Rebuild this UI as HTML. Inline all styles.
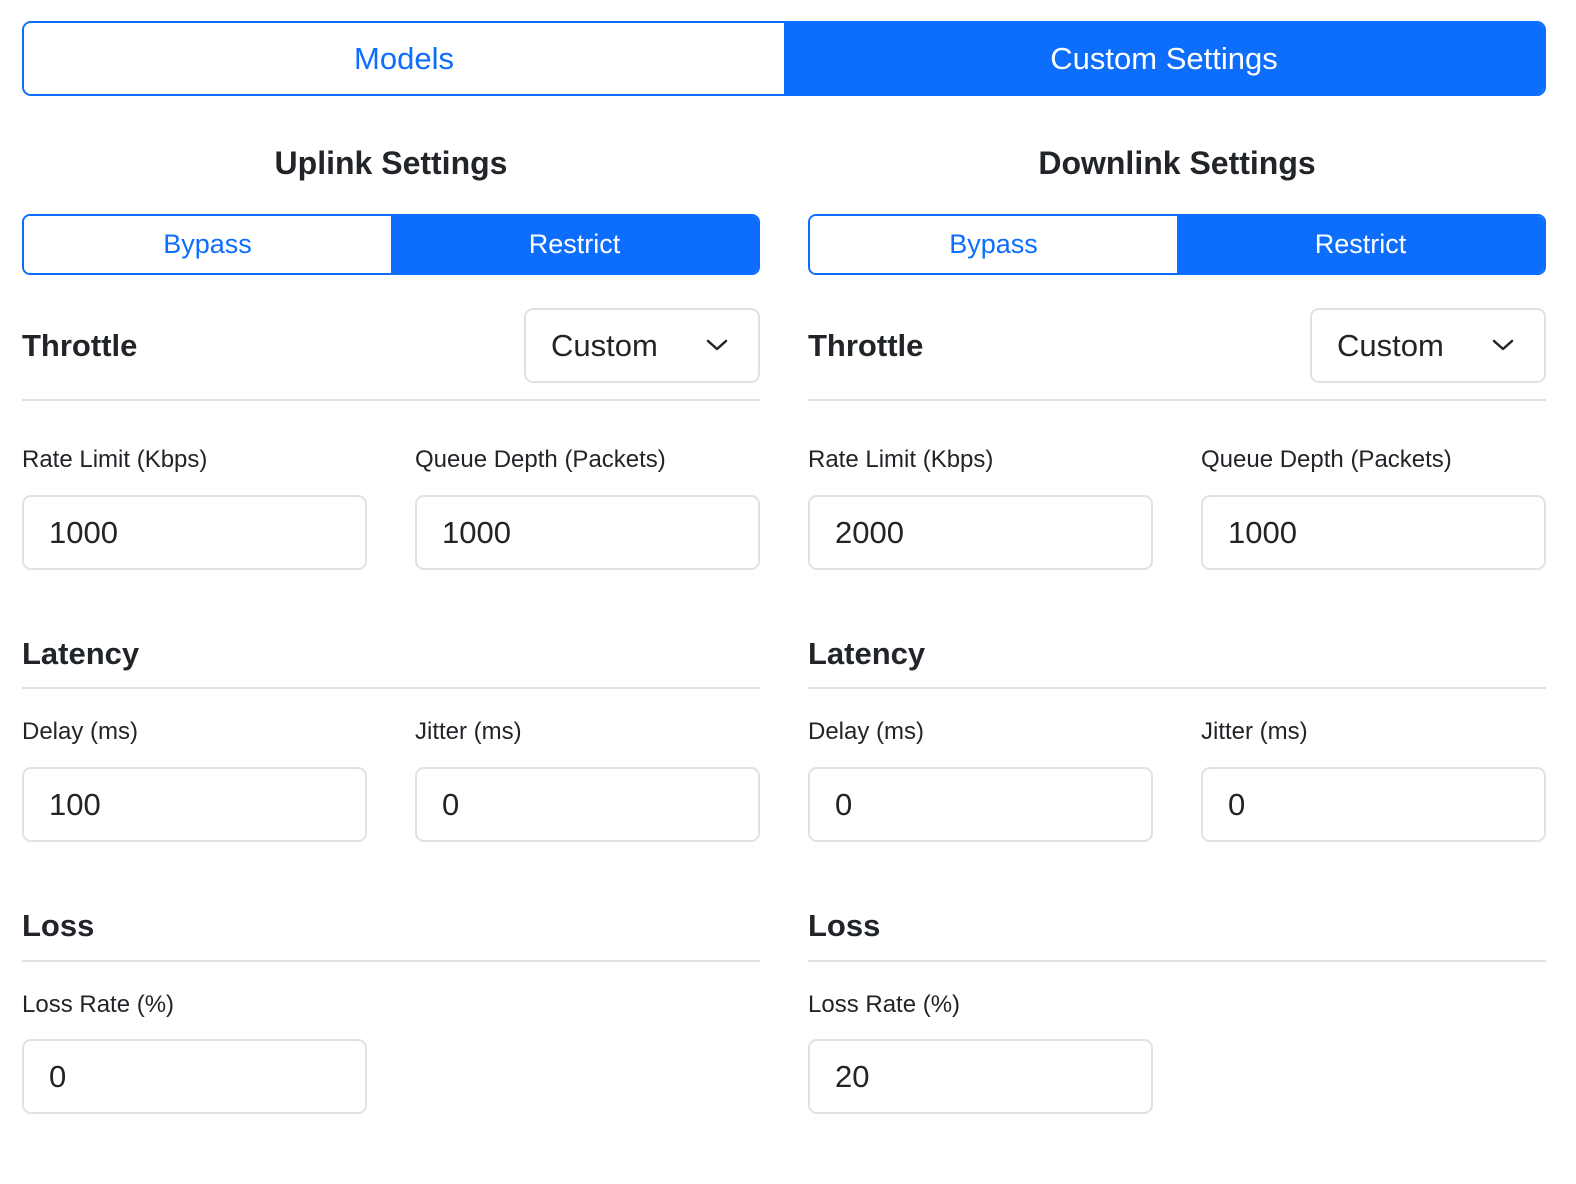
<!DOCTYPE html>
<html><head><meta charset="utf-8">
<style>
*{box-sizing:border-box;margin:0;padding:0}
body{width:1576px;height:1184px;background:#fff;font-family:"Liberation Sans",Arial,sans-serif;color:#212529;position:relative;overflow:hidden}
.a{position:absolute}
.tabs{left:22px;top:21px;width:1524px;height:75px;border:2px solid #0d6efd;border-radius:9px;overflow:hidden;display:flex}
.tabs div,.seg div{flex:1;display:flex;align-items:center;justify-content:center}
.on{background:#0d6efd;color:#fff}
.off{color:#0d6efd;background:#fff}
.tabs div{font-size:31px}
.seg{top:214px;width:738px;height:61px;border:2px solid #0d6efd;border-radius:8px;overflow:hidden;display:flex}
.seg div{font-size:27px}
.h{font-size:32px;font-weight:bold;text-align:center;width:738px;top:143px;line-height:40px}
.sec{font-size:31px;font-weight:bold;line-height:40px}
.hr{height:2px;background:#dee2e6;width:738px}
.lbl{font-size:24px;line-height:30px}
.inp{width:345px;height:75px;border:2px solid #dee2e6;border-radius:9px;font-size:31px;padding-left:25px;line-height:71px}
.sel{width:236px;height:75px;border:2px solid #dee2e6;border-radius:9px;font-size:31px;padding-left:25px;line-height:71px}
.sel svg{position:absolute;right:30px;top:28px}
</style></head><body>
<div class="a tabs"><div class="off">Models</div><div class="on">Custom Settings</div></div>

<!-- left column -->
<div class="a h" style="left:22px">Uplink Settings</div>
<div class="a seg" style="left:22px"><div class="off">Bypass</div><div class="on">Restrict</div></div>
<div class="a sec" style="left:22px;top:326px">Throttle</div>
<div class="a sel" style="left:524px;top:308px">Custom<svg width="22" height="14" viewBox="0 0 22 14"><path d="M2 3l9 8 9-8" fill="none" stroke="#212529" stroke-width="2.5" stroke-linecap="round" stroke-linejoin="round"/></svg></div>
<div class="a hr" style="left:22px;top:399px"></div>
<div class="a lbl" style="left:22px;top:445px">Rate Limit (Kbps)</div>
<div class="a lbl" style="left:415px;top:445px">Queue Depth (Packets)</div>
<div class="a inp" style="left:22px;top:495px">1000</div>
<div class="a inp" style="left:415px;top:495px">1000</div>
<div class="a sec" style="left:22px;top:634px">Latency</div>
<div class="a hr" style="left:22px;top:687px"></div>
<div class="a lbl" style="left:22px;top:717px">Delay (ms)</div>
<div class="a lbl" style="left:415px;top:717px">Jitter (ms)</div>
<div class="a inp" style="left:22px;top:767px">100</div>
<div class="a inp" style="left:415px;top:767px">0</div>
<div class="a sec" style="left:22px;top:906px">Loss</div>
<div class="a hr" style="left:22px;top:960px"></div>
<div class="a lbl" style="left:22px;top:990px">Loss Rate (%)</div>
<div class="a inp" style="left:22px;top:1039px">0</div>

<!-- right column -->
<div class="a h" style="left:808px">Downlink Settings</div>
<div class="a seg" style="left:808px"><div class="off">Bypass</div><div class="on">Restrict</div></div>
<div class="a sec" style="left:808px;top:326px">Throttle</div>
<div class="a sel" style="left:1310px;top:308px">Custom<svg width="22" height="14" viewBox="0 0 22 14"><path d="M2 3l9 8 9-8" fill="none" stroke="#212529" stroke-width="2.5" stroke-linecap="round" stroke-linejoin="round"/></svg></div>
<div class="a hr" style="left:808px;top:399px"></div>
<div class="a lbl" style="left:808px;top:445px">Rate Limit (Kbps)</div>
<div class="a lbl" style="left:1201px;top:445px">Queue Depth (Packets)</div>
<div class="a inp" style="left:808px;top:495px">2000</div>
<div class="a inp" style="left:1201px;top:495px">1000</div>
<div class="a sec" style="left:808px;top:634px">Latency</div>
<div class="a hr" style="left:808px;top:687px"></div>
<div class="a lbl" style="left:808px;top:717px">Delay (ms)</div>
<div class="a lbl" style="left:1201px;top:717px">Jitter (ms)</div>
<div class="a inp" style="left:808px;top:767px">0</div>
<div class="a inp" style="left:1201px;top:767px">0</div>
<div class="a sec" style="left:808px;top:906px">Loss</div>
<div class="a hr" style="left:808px;top:960px"></div>
<div class="a lbl" style="left:808px;top:990px">Loss Rate (%)</div>
<div class="a inp" style="left:808px;top:1039px">20</div>
</body></html>
